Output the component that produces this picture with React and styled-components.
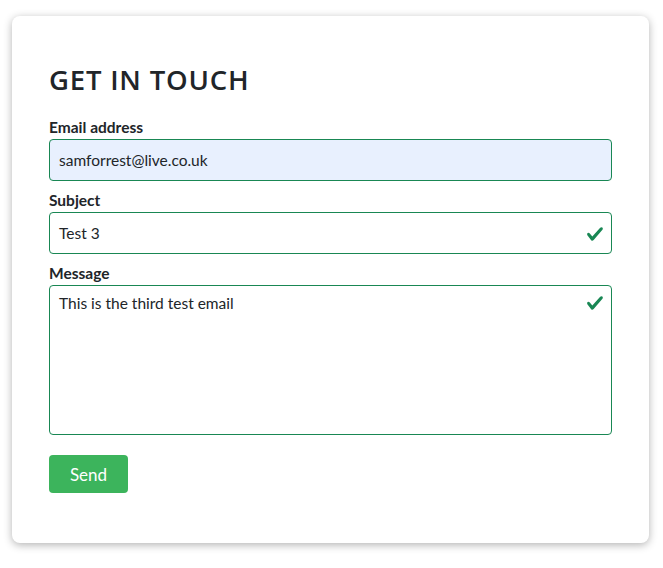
import React from "react";
import styled, { createGlobalStyle } from "styled-components";

const GlobalStyle = createGlobalStyle`
  body {
    margin: 0;
    background: #ffffff;
    font-family: "Lato", "Noto Sans", sans-serif;
  }
`;

const Page = styled.div`
  padding: 16px 14px 25px 12px;
`;

const Card = styled.div`
  background: #fff;
  border-radius: 8px;
  box-shadow: 0 2px 8px rgba(0, 0, 0, 0.3);
  padding: 46px 37px 50px 37px;
  height: 527px;
  box-sizing: border-box;
`;

const Title = styled.h1`
  margin: 0 0 21px;
  font-family: "Open Sans", "Noto Sans", sans-serif;
  font-weight: 600;
  font-size: 27.5px;
  letter-spacing: 0.8px;
  line-height: 36px;
  color: #212529;
`;

const Form = styled.form`
  display: flex;
  flex-direction: column;
  gap: 11px;
`;

const Field = styled.div`
  display: flex;
  flex-direction: column;
`;

const Label = styled.label`
  font-size: 15.5px;
  font-weight: 700;
  line-height: 16px;
  margin-bottom: 4px;
  color: #212529;
`;

const Control = styled.div`
  position: relative;
  height: ${(p) => p.$h}px;
  box-sizing: border-box;
  border: 1px solid #198754;
  border-radius: 4px;
  background: ${(p) => (p.$filled ? "#e8f0fe" : "#fff")};
  padding: ${(p) => (p.$multi ? "8px 9px" : "0 9px")};
  display: flex;
  align-items: ${(p) => (p.$multi ? "flex-start" : "center")};
  font-size: 15.5px;
  color: #212529;
`;

const Check = styled.svg`
  position: absolute;
  right: 7px;
  top: ${(p) => (p.$multi ? "8px" : "12px")};
  width: 18px;
  height: 18px;
`;

const SendButton = styled.button`
  margin-top: 9px;
  align-self: flex-start;
  width: 79px;
  height: 38px;
  border: 0;
  border-radius: 4px;
  background: #3cb45c;
  color: #fff;
  font-family: "Lato", "Noto Sans", sans-serif;
  font-size: 17px;
`;

const CheckIcon = ({ multi }) => (
  <Check $multi={multi} viewBox="0 0 8 8">
    <path
      fill="#198754"
      d="M2.3 6.73.6 4.53c-.4-1.04.46-1.4 1.1-.8l1.1 1.4 3.4-3.8c.6-.63 1.6-.27 1.2.7l-4 4.6c-.43.5-.8.4-1.1.1z"
    />
  </Check>
);

export default function App() {
  return (
    <>
      <GlobalStyle />
      <Page>
        <Card>
          <Title>GET IN TOUCH</Title>
          <Form>
            <Field>
              <Label>Email address</Label>
              <Control $h={42} $filled>
                samforrest@live.co.uk
              </Control>
            </Field>
            <Field>
              <Label>Subject</Label>
              <Control $h={42}>
                Test 3
                <CheckIcon />
              </Control>
            </Field>
            <Field>
              <Label>Message</Label>
              <Control $h={150} $multi>
                This is the third test email
                <CheckIcon multi />
              </Control>
            </Field>
            <SendButton type="button">Send</SendButton>
          </Form>
        </Card>
      </Page>
    </>
  );
}
